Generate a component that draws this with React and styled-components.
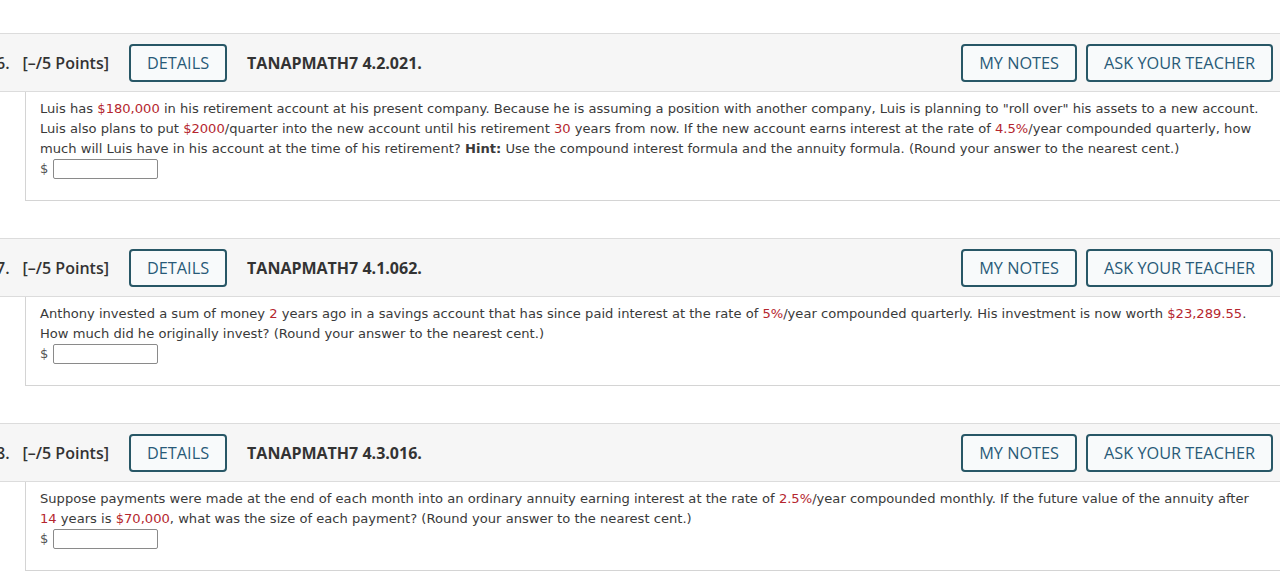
import styled, { createGlobalStyle } from 'styled-components';

const GlobalStyle = createGlobalStyle`
  html, body {
    margin: 0;
    padding: 0;
    background: #fff;
  }
  body {
    overflow: hidden;
    font-family: "Open Sans", "Liberation Sans", sans-serif;
    color: #333;
  }
`;

const Page = styled.div`
  width: 1280px;
  padding-top: 33px;
  overflow: hidden;
`;

const Question = styled.section`
  margin-bottom: 37px;
`;

const Header = styled.div`
  display: flex;
  align-items: center;
  height: 57px;
  background: #f6f6f6;
  border-top: 1px solid #dcdcdc;
  border-bottom: 1px solid #dcdcdc;
  padding-right: 7px;
`;

const Points = styled.div`
  font-size: 16px;
  font-weight: 600;
  color: #333;
  white-space: nowrap;
`;

const Num = styled.span`
  margin-left: -4px;
  margin-right: 13px;
`;

const Button = styled.button`
  height: 38px;
  padding: 0 16px;
  border: 2px solid #285766;
  border-radius: 4px;
  background: #f8fafb;
  color: #285a78;
  font-family: "Open Sans", "Liberation Sans", sans-serif;
  font-size: 16.3px;
  font-weight: 500;
  white-space: nowrap;
  cursor: pointer;
  margin-left: ${p => p.$gap || 0}px;
`;

const Code = styled.div`
  margin-left: 20px;
  font-size: 16px;
  font-weight: 700;
  color: #333;
  flex: 1;
`;

const Body = styled.div`
  margin-left: 25px;
  border-left: 1px solid #d4d4d4;
  border-bottom: 1px solid #d4d4d4;
  padding: 7px 0 21px 14px;
  font-family: "DejaVu Sans", Verdana, sans-serif;
  font-size: 13.1px;
  line-height: 20px;
  color: #3a3a3a;
  white-space: nowrap;
`;

const Val = styled.span`
  color: #b5262e;
`;

const AnswerRow = styled.div`
  display: flex;
  align-items: center;
  gap: 5px;
  height: 20px;
  color: #555;
`;

const Input = styled.input`
  width: 105px;
  height: 20px;
  box-sizing: border-box;
  border: 1px solid #8a8a8a;
  border-radius: 2px;
  background: #fff;
  padding: 0 4px;
`;

const QuestionBlock = ({ num, code, children }) => (
  <Question>
    <Header>
      <Points>
        <Num>{num}.</Num>[–/5 Points]
      </Points>
      <Button $gap={20}>DETAILS</Button>
      <Code>{code}</Code>
      <Button>MY NOTES</Button>
      <Button $gap={9}>ASK YOUR TEACHER</Button>
    </Header>
    <Body>
      {children}
      <AnswerRow>
        $<Input type="text" />
      </AnswerRow>
    </Body>
  </Question>
);

const App = () => (
  <Page>
    <GlobalStyle />
    <QuestionBlock num={6} code="TANAPMATH7 4.2.021.">
      Luis has <Val>$180,000</Val> in his retirement account at his present company. Because he is assuming a position with another company, Luis is planning to "roll over" his assets to a new account.
      <br />
      Luis also plans to put <Val>$2000</Val>/quarter into the new account until his retirement <Val>30</Val> years from now. If the new account earns interest at the rate of <Val>4.5%</Val>/year compounded quarterly, how
      <br />
      much will Luis have in his account at the time of his retirement? <b>Hint:</b> Use the compound interest formula and the annuity formula. (Round your answer to the nearest cent.)
    </QuestionBlock>
    <QuestionBlock num={7} code="TANAPMATH7 4.1.062.">
      Anthony invested a sum of money <Val>2</Val> years ago in a savings account that has since paid interest at the rate of <Val>5%</Val>/year compounded quarterly. His investment is now worth <Val>$23,289.55</Val>.
      <br />
      How much did he originally invest? (Round your answer to the nearest cent.)
    </QuestionBlock>
    <QuestionBlock num={8} code="TANAPMATH7 4.3.016.">
      Suppose payments were made at the end of each month into an ordinary annuity earning interest at the rate of <Val>2.5%</Val>/year compounded monthly. If the future value of the annuity after
      <br />
      <Val>14</Val> years is <Val>$70,000</Val>, what was the size of each payment? (Round your answer to the nearest cent.)
    </QuestionBlock>
  </Page>
);

export default App;
